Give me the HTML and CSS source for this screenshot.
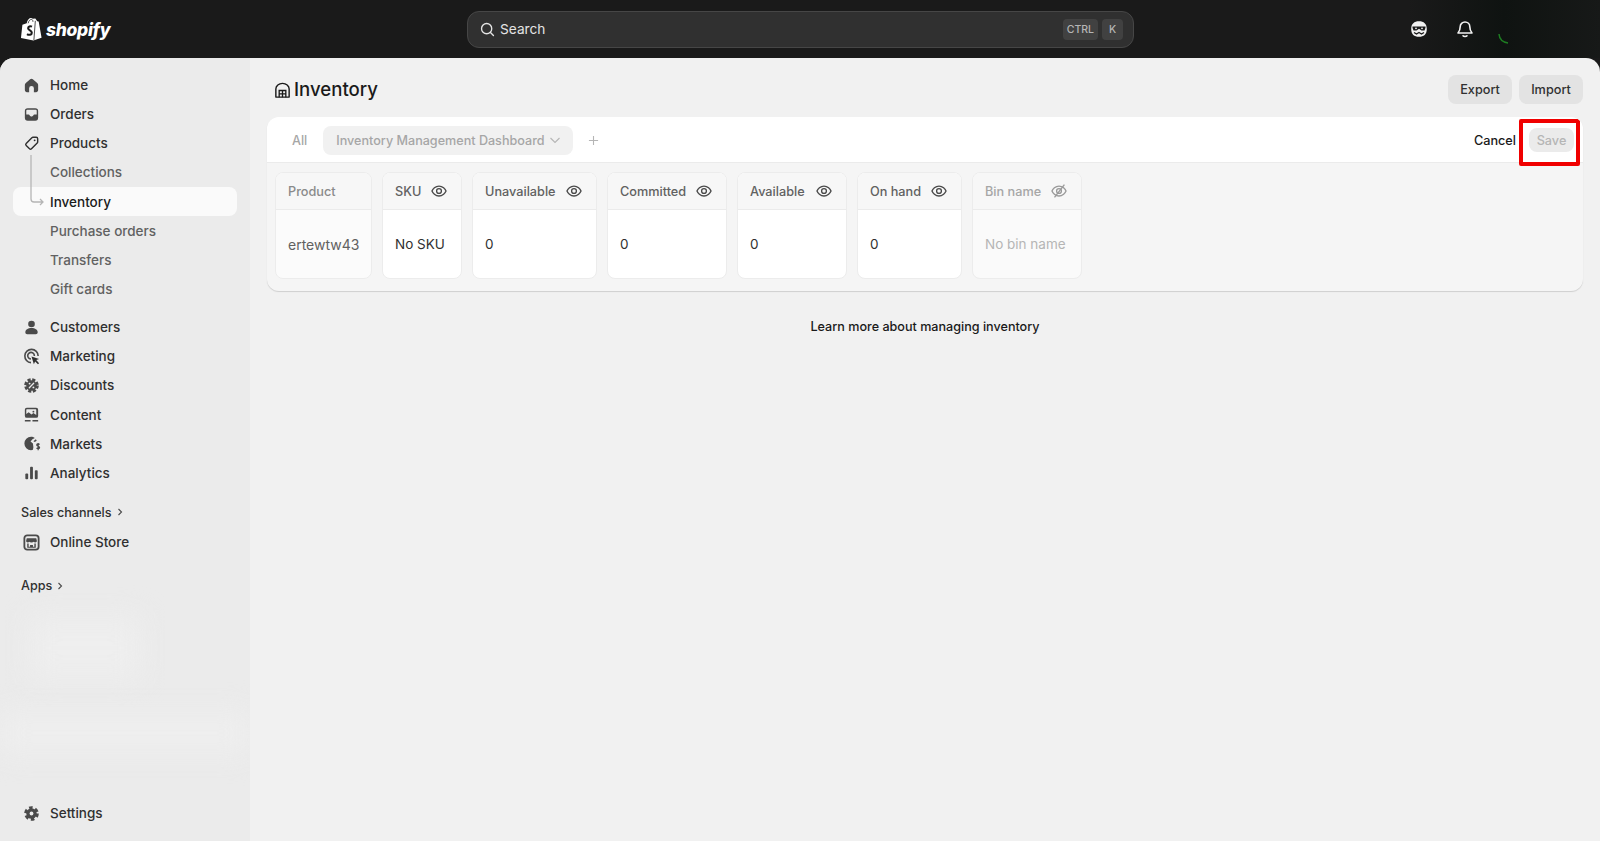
FILE: index.html
```html
<!DOCTYPE html>
<html lang="en">
<head>
    <meta charset="UTF-8">
    <meta name="viewport" content="width=device-width, initial-scale=1.0">
    <title>Inventory</title>
    <link rel="stylesheet" href="styles.css">
</head>
<body>
    <!-- Top bar -->
    <header class="topbar">
        <div class="brand">
            <svg class="brand-bag" viewBox="0 0 24 26">
                <path fill="#fff" d="M2.500 8.500 7 7c.6-3.500 2.500-5.500 4.500-5.500.8 0 1.400.3 1.800.9l2.700-.4 2 3 1.500.3L22.500 22l-8.500 3L1 22.500z"/>
                <path fill="none" stroke="#1a1a1a" stroke-width=".8" d="M16 4.500 14.500 24.500M8.500 7c.5-2.500 2-4 3.500-4 1 0 1.500 1 1.500 2.500"/>
                <path fill="none" stroke="#1a1a1a" stroke-width="2.200" d="M12.500 10.500c-1.800-.8-4-.2-4 1.700 0 2.300 3.800 2.200 3.800 4.600 0 2.400-3 2.800-5 1.500"/>
            </svg>
            <span class="brand-name">shopify</span>
        </div>
        <div class="search">
            <svg class="search-icon" viewBox="0 0 20 20"><circle cx="9" cy="9" r="6" fill="none" stroke="#e3e3e3" stroke-width="1.600"/><path d="m13.500 13.500 3.500 3.500" stroke="#e3e3e3" stroke-width="1.600" stroke-linecap="round"/></svg>
            <span class="search-text">Search</span>
            <span class="kbd">CTRL</span>
            <span class="kbd">K</span>
        </div>
        <div class="top-icons">
            <svg class="top-icon" viewBox="0 0 20 20">
                <path fill="#f1f1f1" d="M10 2.200c4.800 0 7.800 2.500 7.800 7.800s-3 7.800-7.800 7.800-7.800-2.500-7.800-7.800 3-7.800 7.800-7.800z"/>
                <path fill="#1a1a1a" d="M3.500 7.500h13v1.300l-1 2.700h-3L10 9.800l-2.500 1.700h-3l-1-2.700z"/>
                <path fill="none" stroke="#1a1a1a" stroke-width="1.300" d="M5 13.500l2.500 1.500L10 13.500l2.500 1.500 2.500-1.500"/>
                <circle cx="7" cy="9.300" r=".9" fill="#f1f1f1"/><circle cx="13" cy="9.300" r=".9" fill="#f1f1f1"/>
            </svg>
            <svg class="top-icon" viewBox="0 0 20 20">
                <path fill="none" stroke="#f1f1f1" stroke-width="1.600" stroke-linejoin="round" d="M10 3a4.800 4.800 0 0 0-4.800 4.800c0 3-.7 4.500-2.200 6.200h14c-1.500-1.700-2.200-3.200-2.200-6.200A4.800 4.800 0 0 0 10 3z"/>
                <path fill="none" stroke="#f1f1f1" stroke-width="1.600" stroke-linecap="round" d="M8 16.800c.8 1 3.200 1 4 0"/>
            </svg>
            <svg class="spinner-arc" viewBox="0 0 12 12"><path fill="none" stroke="#1e7d22" stroke-width="1.500" d="M1 1c.3 4.500 3 8 9 9"/></svg>
        </div>
    </header>

    <div class="shell">
        <!-- Sidebar -->
        <aside class="sidebar">
            <div class="smudge smudge-a"></div>
            <div class="smudge smudge-b"></div>

            <nav class="nav-group">
                <a class="nav-item"><svg class="nav-icon" viewBox="0 0 20 20"><path fill="#4a4a4a" d="M10 3c-.5 0-1 .2-1.400.5L4 7.400c-.7.600-1 1.300-1 2.200v5.200C3 16 4 17 5.200 17H7.500v-4a2.500 2.500 0 0 1 5 0v4h2.300c1.200 0 2.200-1 2.200-2.200V9.600c0-.9-.3-1.600-1-2.200l-4.600-3.900C11 3.200 10.500 3 10 3z"/></svg>Home</a>
                <a class="nav-item"><svg class="nav-icon" viewBox="0 0 20 20"><path fill="#4a4a4a" fill-rule="evenodd" d="M6 3.500h8a3 3 0 0 1 3 3v7a3 3 0 0 1-3 3H6a3 3 0 0 1-3-3v-7a3 3 0 0 1 3-3zM5.500 5h9a1 1 0 0 1 1 1v4H13c-.5 0-.8.3-1 .7-.3.7-1.100 1.300-2 1.300s-1.700-.6-2-1.300c-.2-.4-.5-.7-1-.7H4.500V6a1 1 0 0 1 1-1z"/></svg>Orders</a>
                <a class="nav-item"><svg class="nav-icon" viewBox="0 0 20 20"><path fill="none" stroke="#303030" stroke-width="1.500" stroke-linejoin="round" d="M11.500 3.500h3.500A1.500 1.500 0 0 1 16.500 5v3.500c0 .5-.2.8-.5 1.100l-6 6a1.500 1.500 0 0 1-2.100 0l-3.500-3.500a1.500 1.500 0 0 1 0-2.100l6-6c.3-.3.7-.5 1.100-.5z"/><circle cx="13.300" cy="6.700" r="1" fill="#303030"/></svg>Products</a>
                <div class="subnav">
                    <svg class="subnav-line" viewBox="0 0 16 52"><path fill="none" stroke="#b5b5b5" stroke-width="1.300" d="M1 0v44c0 2 1 3 3 3h9M10 44l3 3-3 3"/></svg>
                    <a class="nav-item sub">Collections</a>
                    <a class="nav-item sub active">Inventory</a>
                    <a class="nav-item sub">Purchase orders</a>
                    <a class="nav-item sub">Transfers</a>
                    <a class="nav-item sub">Gift cards</a>
                </div>
            </nav>

            <nav class="nav-group second">
                <a class="nav-item"><svg class="nav-icon" viewBox="0 0 20 20"><circle cx="10" cy="6.300" r="3.500" fill="#4a4a4a"/><path fill="#4a4a4a" d="M3.500 15c0-2.700 2.700-4.500 6.500-4.500s6.500 1.800 6.500 4.500c0 1.200-.8 2-2 2h-9c-1.200 0-2-.8-2-2z"/></svg>Customers</a>
                <a class="nav-item"><svg class="nav-icon" viewBox="0 0 20 20"><path fill="none" stroke="#4a4a4a" stroke-width="1.700" d="M17 9.500a7 7 0 1 0-7.500 7"/><path fill="none" stroke="#4a4a4a" stroke-width="1.700" d="M13 9.500a3.500 3.500 0 1 0-3.500 3.200"/><path fill="#303030" d="m10 10 8 2.500-3 1.300L18 17l-1.200 1.200-3-3-1.300 3z"/></svg>Marketing</a>
                <a class="nav-item"><svg class="nav-icon" viewBox="0 0 20 20"><circle cx="10" cy="10" r="5.500" fill="#4a4a4a"/><circle cx="10" cy="10" r="6.200" fill="none" stroke="#4a4a4a" stroke-width="3" stroke-dasharray="3.200 1.670"/><path stroke="#ebebeb" stroke-width="1.400" stroke-linecap="round" d="m12.300 7.700-4.600 4.600"/><circle cx="8" cy="8" r="1" fill="#ebebeb"/><circle cx="12" cy="12" r="1" fill="#ebebeb"/></svg>Discounts</a>
                <a class="nav-item"><svg class="nav-icon" viewBox="0 0 20 20"><path fill="#4a4a4a" fill-rule="evenodd" d="M5 3h10a2 2 0 0 1 2 2v6.500a2 2 0 0 1-2 2H5a2 2 0 0 1-2-2V5a2 2 0 0 1 2-2zm0 1.500a.5.500 0 0 0-.5.5v4.500l2.500-2 3 2.500 2-1.500 3 2V5a.5.500 0 0 0-.5-.5z"/><circle cx="12" cy="7" r="1" fill="#4a4a4a"/><path stroke="#4a4a4a" stroke-width="1.500" d="M3 16.500h6M11 16.500h6"/></svg>Content</a>
                <a class="nav-item"><svg class="nav-icon" viewBox="0 0 20 20"><path fill="#4a4a4a" d="M9.500 3c1.500 0 2.900.5 4 1.300L11 5.500 9 8l2.500 2 .5 4-.5 2.700c-.6.200-1.300.3-2 .3a7 7 0 0 1 0-14zM12 7.500l2.500-2c.5.500.8 1 1 1.500l-2 1.500z"/><path fill="none" stroke="#4a4a4a" stroke-width="1.300" d="M18.500 11c-.8-.8-3-.8-3 .5 0 1.600 3 1.200 3 2.800 0 1.400-2.300 1.400-3.200.5M17 9.500v7.500"/></svg>Markets</a>
                <a class="nav-item"><svg class="nav-icon" viewBox="0 0 20 20"><rect x="3.500" y="11" width="3" height="6" rx="1" fill="#4a4a4a"/><rect x="8.500" y="4" width="3" height="13" rx="1" fill="#4a4a4a"/><rect x="13.500" y="7.500" width="3" height="9.500" rx="1" fill="#4a4a4a"/></svg>Analytics</a>
            </nav>

            <button class="section-link channels">Sales channels <svg class="chev-right" viewBox="0 0 10 10"><path fill="none" stroke="#4a4a4a" stroke-width="1.100" d="m3.500 2 3 3-3 3"/></svg></button>
            <a class="nav-item store"><svg class="nav-icon" viewBox="0 0 20 20"><rect x="2.500" y="2.500" width="15" height="15" rx="3" fill="none" stroke="#4a4a4a" stroke-width="1.900"/><path fill="#4a4a4a" d="M5 5.500h10l.7 3c0 1-.9 1.500-1.700 1.500-.7 0-1.300-.3-1.700-.8-.5.500-1.200.8-2.300.8s-1.800-.3-2.300-.8c-.4.500-1 .8-1.700.8-.8 0-1.700-.5-1.700-1.500z"/><path fill="#4a4a4a" d="M5.500 11H7v3.500h6V11h1.500v4.500h-9zM8.500 12.500h3v2h-3z"/></svg>Online Store</a>
            <button class="section-link apps">Apps <svg class="chev-right" viewBox="0 0 10 10"><path fill="none" stroke="#4a4a4a" stroke-width="1.100" d="m3.500 2 3 3-3 3"/></svg></button>

            <a class="nav-item settings"><svg class="nav-icon" viewBox="0 0 20 20"><circle cx="10" cy="10" r="5.500" fill="#4a4a4a"/><circle cx="10" cy="10" r="6.200" fill="none" stroke="#4a4a4a" stroke-width="3" stroke-dasharray="3.700 2.790"/><circle cx="10" cy="10" r="2" fill="#ebebeb"/></svg>Settings</a>
        </aside>

        <!-- Page content -->
        <main class="content">
            <div class="page-header">
                <h1 class="page-title">
                    <svg class="title-icon" viewBox="0 0 20 20"><path fill="none" stroke="#1a1a1a" stroke-width="1.500" stroke-linejoin="round" d="M3 16.500V8.500C3 6 4 5 5 4.300 6.500 3 8 2.500 10 2.500s3.500.5 5 1.800C16 5 17 6 17 8.500v8c0 .3-.2.500-.5.500h-13c-.3 0-.5-.2-.5-.5z"/><path fill="none" stroke="#1a1a1a" stroke-width="1.400" d="M6.500 17v-7h7v7M6.500 13.500h7M10 10v7"/></svg>
                    Inventory
                </h1>
                <div class="header-actions">
                    <button class="btn">Export</button>
                    <button class="btn">Import</button>
                </div>
            </div>

            <section class="card">
                <div class="tabs">
                    <span class="tab-all">All</span>
                    <span class="tab-pill">Inventory Management Dashboard
                        <svg class="chev-down" viewBox="0 0 12 12"><path fill="none" stroke="#b5b5b5" stroke-width="1.100" d="m1.500 4 4.500 4.500L10.500 4"/></svg>
                    </span>
                    <svg class="tab-add" viewBox="0 0 12 12"><path stroke="#b5b5b5" stroke-width="1.200" d="M6 1v10M1 6h10"/></svg>
                    <div class="tab-actions">
                        <button class="btn-plain">Cancel</button>
                        <button class="btn-save">Save</button>
                        <div class="highlight"></div>
                    </div>
                </div>

                <div class="columns">
                    <div class="col col-muted">
                        <div class="col-head">Product</div>
                        <div class="col-cell">ertewtw43</div>
                    </div>
                    <div class="col">
                        <div class="col-head">SKU <svg class="eye" viewBox="0 0 20 20"><path fill="none" stroke="#4a4a4a" stroke-width="1.500" d="M10 4.500c4 0 7 3.300 7.800 5.500-.8 2.200-3.800 5.500-7.800 5.500S3 12.200 2.200 10C3 7.800 6 4.500 10 4.500z"/><circle cx="10" cy="10" r="2.700" fill="none" stroke="#4a4a4a" stroke-width="1.500"/></svg></div>
                        <div class="col-cell">No SKU</div>
                    </div>
                    <div class="col">
                        <div class="col-head">Unavailable <svg class="eye" viewBox="0 0 20 20"><path fill="none" stroke="#4a4a4a" stroke-width="1.500" d="M10 4.500c4 0 7 3.300 7.800 5.500-.8 2.200-3.800 5.500-7.800 5.500S3 12.200 2.200 10C3 7.800 6 4.500 10 4.500z"/><circle cx="10" cy="10" r="2.700" fill="none" stroke="#4a4a4a" stroke-width="1.500"/></svg></div>
                        <div class="col-cell">0</div>
                    </div>
                    <div class="col">
                        <div class="col-head">Committed <svg class="eye" viewBox="0 0 20 20"><path fill="none" stroke="#4a4a4a" stroke-width="1.500" d="M10 4.500c4 0 7 3.300 7.800 5.500-.8 2.200-3.800 5.500-7.800 5.500S3 12.200 2.200 10C3 7.800 6 4.500 10 4.500z"/><circle cx="10" cy="10" r="2.700" fill="none" stroke="#4a4a4a" stroke-width="1.500"/></svg></div>
                        <div class="col-cell">0</div>
                    </div>
                    <div class="col">
                        <div class="col-head">Available <svg class="eye" viewBox="0 0 20 20"><path fill="none" stroke="#4a4a4a" stroke-width="1.500" d="M10 4.500c4 0 7 3.300 7.800 5.500-.8 2.200-3.800 5.500-7.800 5.500S3 12.200 2.200 10C3 7.800 6 4.500 10 4.500z"/><circle cx="10" cy="10" r="2.700" fill="none" stroke="#4a4a4a" stroke-width="1.500"/></svg></div>
                        <div class="col-cell">0</div>
                    </div>
                    <div class="col">
                        <div class="col-head">On hand <svg class="eye" viewBox="0 0 20 20"><path fill="none" stroke="#4a4a4a" stroke-width="1.500" d="M10 4.500c4 0 7 3.300 7.800 5.500-.8 2.200-3.800 5.500-7.800 5.500S3 12.200 2.200 10C3 7.800 6 4.500 10 4.500z"/><circle cx="10" cy="10" r="2.700" fill="none" stroke="#4a4a4a" stroke-width="1.500"/></svg></div>
                        <div class="col-cell">0</div>
                    </div>
                    <div class="col col-hidden">
                        <div class="col-head">Bin name <svg class="eye" viewBox="0 0 20 20"><path fill="none" stroke="#9a9a9a" stroke-width="1.500" d="M10 4.500c4 0 7 3.300 7.800 5.500-.8 2.200-3.800 5.500-7.800 5.500S3 12.200 2.200 10C3 7.800 6 4.500 10 4.500z"/><circle cx="10" cy="10" r="2.700" fill="none" stroke="#9a9a9a" stroke-width="1.500"/><path stroke="#9a9a9a" stroke-width="1.500" d="M16 3 5 17"/></svg></div>
                        <div class="col-cell">No bin name</div>
                    </div>
                </div>
            </section>

            <p class="learn-more">Learn more about managing inventory</p>
        </main>
    </div>
</body>
</html>
```

FILE: styles.css
```css
* {
    box-sizing: border-box;
}

body {
    margin: 0;
    height: 841px;
    overflow: hidden;
    display: flex;
    flex-direction: column;
    background-color: #1a1a1a;
    font-family: Inter, "Liberation Sans", sans-serif;
    font-size: 13.5px;
    color: #303030;
}

button {
    font-family: inherit;
    border: none;
    background: none;
    padding: 0;
}

/* top bar */
.topbar {
    height: 58px;
    flex-shrink: 0;
    display: flex;
    align-items: center;
    position: relative;
    background: linear-gradient(90deg, #1a1a1a 0, #1a1a1a 88%, #0f1311 94%, #171918 100%);
}

.brand {
    width: 467px;
    padding-left: 20px;
    display: flex;
    align-items: center;
    gap: 3px;
}

.brand-bag {
    width: 23px;
    height: 26px;
}

.brand-name {
    font-size: 17.5px;
    font-weight: 800;
    font-style: italic;
    color: #fff;
    letter-spacing: -0.3px;
}

.search {
    width: 667px;
    height: 37px;
    display: flex;
    align-items: center;
    gap: 3px;
    padding: 0 10px 0 11px;
    background-color: #303030;
    border: 1px solid #464646;
    border-radius: 12px;
}

.search-icon {
    width: 17px;
    height: 17px;
}

.search-text {
    flex: 1;
    margin-left: 1px;
    font-size: 13.7px;
    color: #e3e3e3;
}

.kbd {
    height: 21px;
    min-width: 21px;
    padding: 0 4px;
    margin-left: 1px;
    display: flex;
    align-items: center;
    justify-content: center;
    background-color: #414141;
    border-radius: 4px;
    color: #b5b5b5;
    font-size: 10.5px;
    font-weight: 500;
}

.top-icons {
    display: flex;
    align-items: center;
    margin-left: 275px;
    gap: 26px;
}

.top-icon {
    width: 20px;
    height: 20px;
}

.spinner-arc {
    width: 12px;
    height: 12px;
    margin: 20px 0 0 -3px;
}

/* layout */
.shell {
    flex: 1;
    display: flex;
    overflow: hidden;
    border-radius: 14px 14px 0 0;
    background-color: #f1f1f1;
}

/* sidebar */
.sidebar {
    width: 250px;
    flex-shrink: 0;
    position: relative;
    overflow: hidden;
    display: flex;
    flex-direction: column;
    padding: 12.5px 13px 13px;
    background-color: #ebebeb;
}

.smudge {
    position: absolute;
    background-color: #eeeeee;
    filter: blur(14px);
}

.smudge-a {
    left: 30px;
    top: 560px;
    width: 110px;
    height: 60px;
}

.smudge-b {
    left: 0;
    top: 655px;
    width: 250px;
    height: 40px;
}

.nav-group {
    position: relative;
}

.second {
    margin-top: 9px;
}

.nav-item {
    height: 29.15px;
    display: flex;
    align-items: center;
    gap: 9px;
    padding-left: 9px;
    position: relative;
    border-radius: 8px;
    font-weight: 450;
    color: #303030;
    white-space: nowrap;
}

.nav-icon {
    width: 19px;
    height: 19px;
    flex-shrink: 0;
}

.subnav {
    position: relative;
}

.subnav-line {
    position: absolute;
    left: 17px;
    top: -3px;
    width: 16px;
    height: 52px;
    z-index: 2;
}

.sub {
    padding-left: 37px;
    color: #616161;
}

.active {
    background-color: #fafafa;
    color: #1a1a1a;
    font-weight: 550;
}

.section-link {
    display: flex;
    align-items: center;
    gap: 3px;
    padding-left: 8px;
    font-size: 12.6px;
    font-weight: 450;
    color: #303030;
    position: relative;
}

.channels {
    margin-top: 17px;
    height: 16px;
}

.apps {
    margin-top: 21px;
    height: 16px;
}

.chev-right {
    width: 10px;
    height: 10px;
}

.store {
    margin-top: 7px;
}

.settings {
    margin-top: auto;
}

/* content */
.content {
    flex: 1;
    min-width: 0;
    padding: 17px 17px 0;
}

.page-header {
    height: 29px;
    display: flex;
    align-items: center;
    justify-content: space-between;
}

.page-title {
    margin: -1px 0 0 6px;
    display: flex;
    align-items: center;
    gap: 2px;
    font-size: 18.6px;
    font-weight: 550;
    color: #1a1a1a;
}

.title-icon {
    width: 19px;
    height: 19px;
    margin-top: 2px;
}

.header-actions {
    display: flex;
    gap: 7px;
}

.btn {
    width: 64px;
    height: 29px;
    background-color: #e3e3e3;
    border-radius: 8px;
    font-size: 12.7px;
    font-weight: 500;
    color: #303030;
}

.card {
    margin-top: 13px;
    background-color: #f5f5f5;
    border-radius: 12px;
    box-shadow: 0 1px 1px #cfcfcf;
    overflow: hidden;
    height: 174px;
}

.tabs {
    height: 46px;
    display: flex;
    align-items: center;
    padding: 1px 0 0 24px;
    background-color: #fff;
    border-bottom: 1px solid #ebebeb;
    position: relative;
}

.tab-all {
    color: #a6a6a6;
    font-size: 12.6px;
    font-weight: 500;
    margin-left: 1px;
}

.tab-pill {
    height: 29px;
    margin-left: 16px;
    padding: 0 12px 0 13px;
    display: flex;
    align-items: center;
    gap: 4px;
    background-color: #f1f1f1;
    border-radius: 8px;
    color: #a6a6a6;
    font-size: 12.6px;
    font-weight: 500;
}

.chev-down {
    width: 12px;
    height: 12px;
}

.tab-add {
    width: 11px;
    height: 11px;
    margin-left: 15px;
}

.tab-actions {
    margin-left: auto;
    display: flex;
    align-items: center;
    padding-right: 9px;
    gap: 13px;
}

.btn-plain {
    font-size: 12.7px;
    font-weight: 500;
    color: #1a1a1a;
}

.btn-save {
    width: 45px;
    height: 24px;
    background-color: #ebebeb;
    border-radius: 8px;
    color: #b5b5b5;
    font-size: 12.7px;
    font-weight: 500;
}

.highlight {
    position: absolute;
    right: 3px;
    top: 2px;
    width: 61px;
    height: 47px;
    border: 4px solid #f00000;
    border-radius: 2px;
}

.columns {
    display: grid;
    grid-template-columns: 97px 80px 125px 120px 110px 105px 110px;
    gap: 10px;
    padding: 9px 9px 9px 8px;
}

.col {
    background-color: #fff;
    border: 1px solid #ececec;
    border-radius: 8px;
    overflow: hidden;
}

.col-head {
    height: 37px;
    padding: 0 13px 0 12px;
    display: flex;
    align-items: center;
    justify-content: space-between;
    gap: 4px;
    background-color: #f7f7f7;
    border-bottom: 1px solid #ebebeb;
    color: #616161;
    font-size: 12.7px;
    font-weight: 500;
    white-space: nowrap;
}

.col-cell {
    height: 68px;
    padding: 0 12px;
    display: flex;
    align-items: center;
    color: #303030;
    font-weight: 400;
    white-space: nowrap;
}

.col-muted {
    background-color: #fbfbfb;
}

.col-muted .col-head {
    color: #8a8a8a;
}

.col-muted .col-cell {
    color: #616161;
    font-size: 14px;
}

.col-hidden {
    background-color: #fafafa;
}

.col-hidden .col-head {
    color: #a6a6a6;
}

.col-hidden .col-cell {
    color: #b5b5b5;
}

.eye {
    width: 18px;
    height: 18px;
    flex-shrink: 0;
}

.learn-more {
    margin: 28px 0 0;
    text-align: center;
    font-size: 12.6px;
    font-weight: 500;
    color: #1a1a1a;
}
```
